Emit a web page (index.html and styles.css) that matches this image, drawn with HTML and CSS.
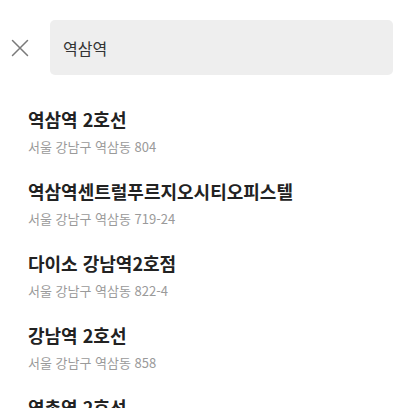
FILE: index.html
```html
<!DOCTYPE html>
<html lang="ko">
<head>
<meta charset="utf-8">
<link rel="stylesheet" href="styles.css">
</head>
<body>
<div class="page">
  <header class="search-bar">
    <button class="close" aria-label="닫기">
      <svg width="18" height="18" viewBox="0 0 18 18"><path d="M1.5 1.5 L16.5 16.5 M16.5 1.5 L1.5 16.5" stroke="#7a7a7a" stroke-width="1.5" fill="none" stroke-linecap="round"/></svg>
    </button>
    <div class="search-box">역삼역</div>
  </header>
  <ul class="results">
    <li class="item"><div class="title">역삼역 2호선</div><div class="addr">서울 강남구 역삼동 804</div></li>
    <li class="item"><div class="title">역삼역센트럴푸르지오시티오피스텔</div><div class="addr">서울 강남구 역삼동 719-24</div></li>
    <li class="item"><div class="title">다이소 강남역2호점</div><div class="addr">서울 강남구 역삼동 822-4</div></li>
    <li class="item"><div class="title">강남역 2호선</div><div class="addr">서울 강남구 역삼동 858</div></li>
    <li class="item"><div class="title">역촌역 2호선</div><div class="addr">서울 강남구 역삼동 858</div></li>
  </ul>
</div>
</body>
</html>
```
FILE: styles.css
```css
html, body {
  margin: 0;
  padding: 0;
  background: #ffffff;
  overflow: hidden;
}
body {
  font-family: "Noto Sans CJK KR", "Noto Sans", sans-serif;
  color: #222222;
}
.page {
  width: 408px;
  height: 408px;
  overflow: hidden;
}
.search-bar {
  display: flex;
  align-items: center;
  padding: 20px 15px 0 11px;
  gap: 21px;
}
.close {
  border: 0;
  background: none;
  padding: 0;
  width: 18px;
  height: 18px;
  display: flex;
}
.search-box {
  flex: 1;
  height: 55px;
  background: #eeeeee;
  border-radius: 5px;
  display: flex;
  align-items: center;
  padding-left: 13px;
  font-size: 16px;
  color: #333333;
}
.results {
  list-style: none;
  margin: 0;
  padding: 32px 0 0 28px;
}
.item {
  display: flex;
  flex-direction: column;
  gap: 8px;
  padding-bottom: 24px;
}
.title {
  font-size: 18px;
  line-height: 24px;
  font-weight: 700;
  color: #222222;
}
.addr {
  font-size: 13px;
  line-height: 16px;
  color: #9a9a9a;
}
```
